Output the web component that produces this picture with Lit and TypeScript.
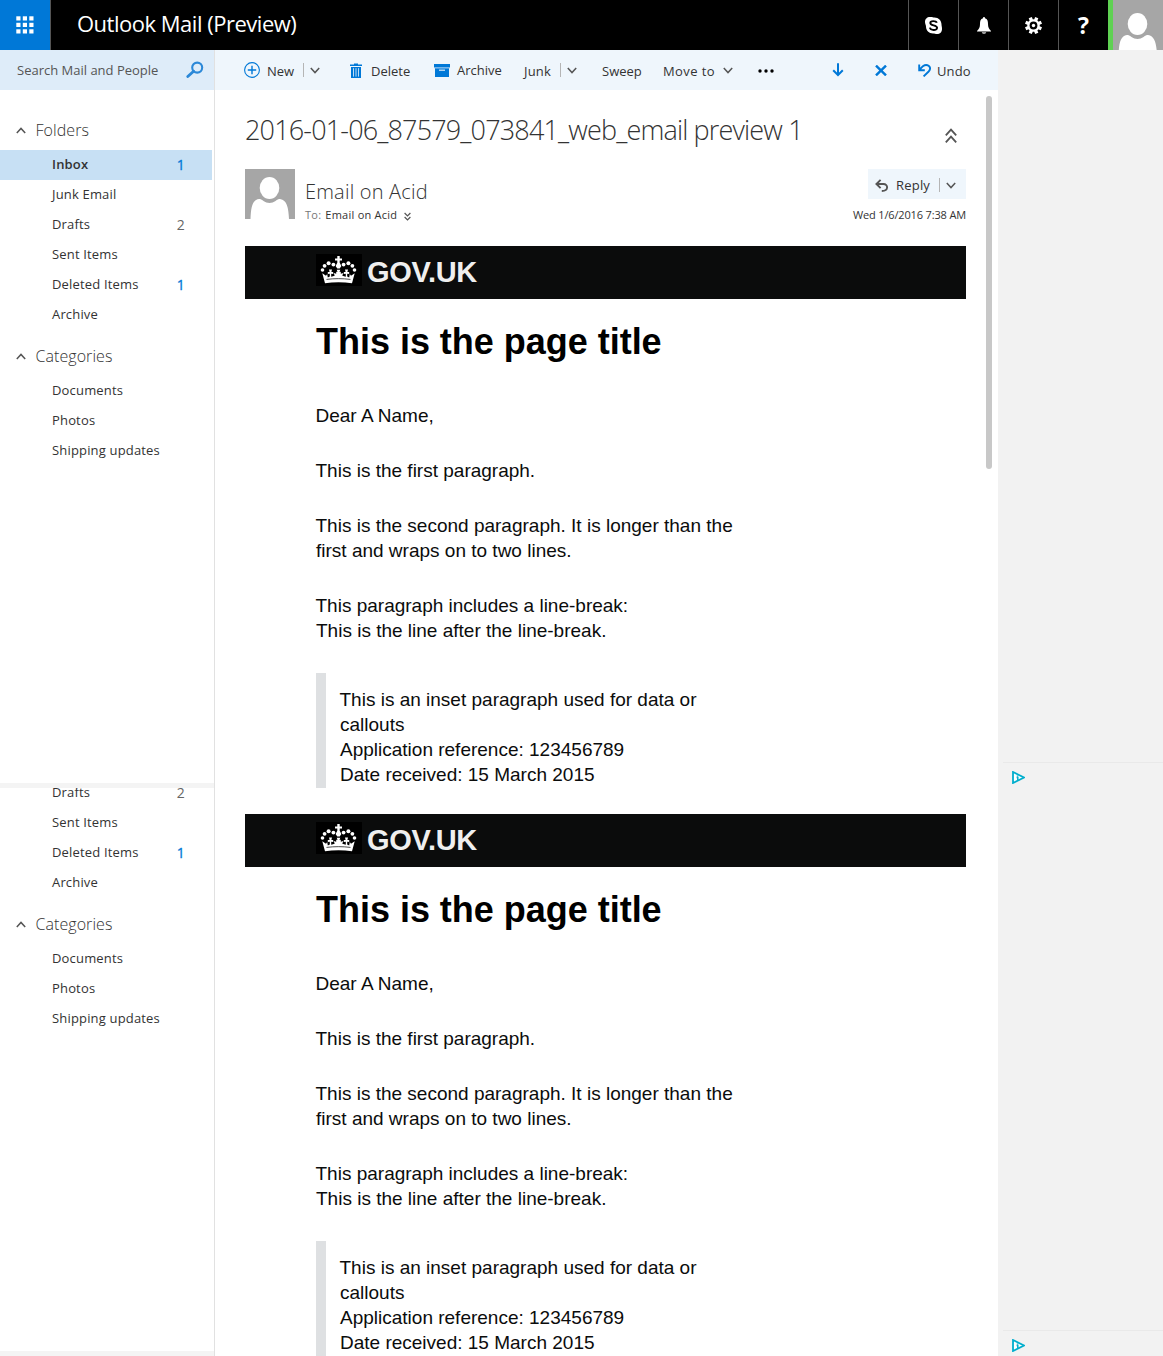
import { LitElement, html, css, svg, nothing } from "lit";
import { customElement, property } from "lit/decorators.js";
import { classMap } from "lit/directives/class-map.js";

interface Folder {
  name: string;
  count?: number;
  unread?: boolean;
  active?: boolean;
}

const FOLDERS: Folder[] = [
  { name: "Inbox", count: 1, unread: true, active: true },
  { name: "Junk Email" },
  { name: "Drafts", count: 2 },
  { name: "Sent Items" },
  { name: "Deleted Items", count: 1, unread: true },
  { name: "Archive" },
];

const CATEGORIES: Folder[] = [
  { name: "Documents" },
  { name: "Photos" },
  { name: "Shipping updates" },
];

const SHAPES: Record<string, unknown> = {
  waffle: svg`${[0, 1, 2].map((r) =>
    [0, 1, 2].map((c) => svg`<rect x=${c * 6.5 + 0.3} y=${r * 6.5 + 0.3} width="4.2" height="4.2" fill="#fff" />`),
  )}`,
  search: svg`<circle cx="11.2" cy="6.6" r="5" fill="none" stroke="#2b88d8" stroke-width="2.1"/><path d="M7.6 10.2 1.8 15.6" stroke="#2b88d8" stroke-width="2.8" stroke-linecap="round"/>`,
  plus: svg`<circle cx="8" cy="8" r="7.4" fill="none" stroke="#0078d7" stroke-width="1.1"/><path d="M8 3.8v8.4M3.8 8h8.4" stroke="#0078d7" stroke-width="1.4"/>`,
  chevron: svg`<path d="M.8 1 5 5.600 9.200 1" fill="none" stroke="#555" stroke-width="1.500"/>`,
  chevronUp: svg`<path d="M.8 6 5 1.400 9.200 6" fill="none" stroke="#555" stroke-width="1.500"/>`,
  trash: svg`<path d="M0 1.600h4V.4h4v1.200h4V3H0zM1 4h10v11H1z" fill="#0078d7"/><path d="M3.500 5.200v8.400M6 5.200v8.400M8.500 5.200v8.400" stroke="#eff6fc" stroke-width=".8"/>`,
  box: svg`<path d="M0 0h16v3.400H0zM1 4.200h14V13H1z" fill="#0078d7"/><path d="M0 3.400h16v.8H0z" fill="#7ab8ea"/><path d="M5 6.200h6" stroke="#cfe6f8" stroke-width="1.300"/>`,
  dots: svg`<circle cx="2" cy="2" r="1.700"/><circle cx="8" cy="2" r="1.700"/><circle cx="14" cy="2" r="1.700"/>`,
  down: svg`<path d="M6 .3v11M1.200 7.300 6 12l4.800-4.700" fill="none" stroke="#0078d7" stroke-width="2"/>`,
  cross: svg`<path d="M1 .6l10 9.800M11 .6 1 10.400" fill="none" stroke="#0078d7" stroke-width="2.400"/>`,
  undo: svg`<path d="M1.200.6v5.600h5.600M1.600 5.800C4.400 2 8 0 10.600 1.800c2.400 1.800 1.600 4-.2 6L5.600 12.400" fill="none" stroke="#0078d7" stroke-width="1.900"/>`,
  reply: svg`<path d="M5.600.8 1.400 5l4.200 4.200M1.400 5h7c5 0 5.400 7-1.600 7" fill="none" stroke="#555" stroke-width="1.900"/>`,
  doubleUp: svg`<path d="M.8 7.400 6 1.600l5.200 5.800M.8 14.400 6 8.600l5.200 5.800" fill="none" stroke="#555" stroke-width="1.800"/>`,
  doubleDown: svg`<path d="M.6 1 3.500 4l2.900-3M.6 5 3.500 8l2.900-3" fill="none" stroke="#555" stroke-width="1.200"/>`,
  skype: svg`<path d="M5 0C8 0 8 .6 9.500.6c4 0 7 3 7 7C16.500 9 17 10 17 12c0 3-2 5-5 5-1.500 0-2.500-.6-4-.6-4 0-7-3-7-7C1 8 0 7 0 5c0-3 2-5 5-5z" fill="#fff"/><path d="M11.800 5.800C11 3.600 5.300 3.400 5.300 6c0 3 6.800 1.600 6.800 4.800 0 3-6.600 2.800-7.200-.2" fill="none" stroke="#000" stroke-width="1.900"/>`,
  bell: svg`<path d="M6 1.200c0-1.600 2-1.600 2 0C10.500 2 11 4 11 7c0 3.500 1 5 3 7v.6H0V14c2-2 3-3.500 3-7 0-3 .5-5 3-5.800z" fill="#fff"/><path d="M4.800 15.200h4.400c-.4 2-4 2-4.400 0z" fill="#ccc"/>`,
  gear: svg`${[0, 45, 90, 135].map(
    (a) => svg`<rect x="6.800" y="0" width="3.400" height="17" fill="#fff" transform="rotate(${a + 22.5} 8.5 8.5)"/>`,
  )}<circle cx="8.500" cy="8.500" r="6.200" fill="#fff"/><circle cx="8.500" cy="8.500" r="3.900" fill="#000"/><circle cx="8.500" cy="8.500" r="1.700" fill="#fff"/>`,
  person: svg`<rect width="50" height="55" fill="#a6a6a6"/><ellipse cx="24.500" cy="24" rx="9.800" ry="11" fill="#fff"/><path d="M5.500 55C6 44 7 36 14 35c2-.3 3 .8 4.500 2 3.500 2.600 8.500 2.600 12 0 1.500-1.200 2.500-2.300 4.500-2 7 1 8.500 9 9 20z" fill="#fff"/>`,
  crown: svg`<rect width="46" height="32" fill="#000"/>
    <g fill="#fff">
      <path d="M21.300 2h2.400v2.400h2.300v2.200h-2.300v2.200l1.700 3.200-1.700 2.600h-2.400l-1.700-2.600 1.700-3.200V6.600H19V4.400h2.300z"/>
      <circle cx="17.400" cy="10.600" r="1.900"/><circle cx="27.600" cy="10.600" r="1.900"/>
      <circle cx="12.600" cy="9.300" r="2"/><circle cx="32.400" cy="9.300" r="2"/>
      <circle cx="8.600" cy="11.800" r="1.900"/><circle cx="36.400" cy="11.800" r="1.900"/>
      <circle cx="6.500" cy="16" r="1.800"/><circle cx="38.500" cy="16" r="1.800"/>
      <path d="M6.300 19.200l3.700 2.600 1.200-1.700.6 3.400 2-1V19.800l-2 .3v-2.200l1.800.2-.6-2.500h3l-.6 2.500 1.800-.2v2.200l-2-.3v3l3.500-1-1-2.800 2.500.8v-2l1.300.2-.8-2.200h3.600l-.8 2.200 1.300-.2v2l2.500-.8-1 2.800 3.500 1v-3l-2 .3v-2.200l1.800.2-.6-2.500h3l-.6 2.500 1.800-.2v2.200l-2-.3v2.700l2 1 .6-3.400 1.200 1.700 3.700-2.600L36 29.200c-8.500-1.300-18.500-1.300-27 0z"/>
    </g>
    <path d="M10.500 25.400c8-1 16-1 24 0" fill="none" stroke="#000" stroke-width=".7"/>`,
  ad: svg`<path d="M1 1v11l11-5.500z" fill="#fff" stroke="#00aecd" stroke-width="1.800"/><path d="M5.500 4.500v1M4.600 6.600h1.200v3" fill="none" stroke="#00aecd" stroke-width="1.500"/>`,
};

const icon = (name: string, w: number, h: number, viewBox = `0 0 ${w} ${h}`) =>
  html`<svg width=${w} height=${h} viewBox=${viewBox} aria-hidden="true">${SHAPES[name]}</svg>`;

const base = css`
  :host {
    display: block;
    font-family: "Open Sans", "Noto Sans", sans-serif;
    font-size: 13px;
    color: #333;
  }
  * {
    box-sizing: border-box;
  }
  svg {
    display: block;
    flex: none;
  }
`;

@customElement("suite-header")
class SuiteHeader extends LitElement {
  static styles = [
    base,
    css`
      .bar {
        display: flex;
        height: 50px;
        background: #000;
        color: #fff;
      }
      .launcher {
        width: 51px;
        display: grid;
        place-items: center;
        background: #0078d7;
        border-right: 1px solid #555;
      }
      .title {
        flex: 1;
        padding-left: 26px;
        font-size: 22px;
        line-height: 47px;
        letter-spacing: -0.49px;
      }
      .tool {
        width: 50px;
        display: grid;
        place-items: center;
        border-left: 1px solid #555;
      }
      .help {
        font: bold 23px/50px "Open Sans", sans-serif;
      }
      .me {
        border-left: 5px solid #5fd152;
      }
    `,
  ];

  render() {
    return html`<header class="bar">
      <div class="launcher">${icon("waffle", 18, 18)}</div>
      <div class="title">Outlook Mail (Preview)</div>
      <div class="tool">${icon("skype", 17, 17)}</div>
      <div class="tool">${icon("bell", 14, 17)}</div>
      <div class="tool">${icon("gear", 17, 17)}</div>
      <div class="tool help">?</div>
      <div class="me">${icon("person", 50, 50)}</div>
    </header>`;
  }
}

@customElement("folder-group")
class FolderGroup extends LitElement {
  @property() label = "";
  @property({ attribute: false }) items: Folder[] = [];

  static styles = [
    base,
    css`
      .head {
        display: flex;
        align-items: center;
        height: 40px;
        padding-left: 15.5px;
        gap: 10px;
        font-size: 16px;
        font-weight: 300;
        letter-spacing: 0.06px;
      }
      .item {
        display: flex;
        justify-content: space-between;
        width: 212px;
        height: 30px;
        padding: 0 27px 0 52px;
        line-height: 28px;
        letter-spacing: 0.17px;
      }
      .active {
        background: #c7e0f4;
      }
      .active .name {
        font-weight: 600;
      }
      .count {
        font-size: 14px;
        line-height: 30px;
        color: #666;
      }
      .unread {
        color: #0078d7;
        -webkit-text-stroke: 0.3px #0078d7;
      }
    `,
  ];

  render() {
    return html`${this.label
        ? html`<div class="head">${icon("chevronUp", 10, 7)}<span>${this.label}</span></div>`
        : nothing}
      ${this.items.map(
        (f) => html`<div class=${classMap({ item: true, active: !!f.active })}>
          <span class="name">${f.name}</span>
          ${f.count ? html`<span class=${classMap({ count: true, unread: !!f.unread })}>${f.count}</span>` : nothing}
        </div>`,
      )}`;
  }
}

@customElement("mail-nav")
class MailNav extends LitElement {
  @property({ type: Boolean, reflect: true }) scrolled = false;

  static styles = [
    base,
    css`
      :host {
        height: 100%;
        border-right: 1px solid #e1e1e1;
      }
      .nav {
        display: flex;
        flex-direction: column;
        height: 100%;
      }
      .search {
        display: flex;
        align-items: center;
        justify-content: space-between;
        height: 40px;
        padding: 0 10px 0 17px;
        background: #deecf9;
        color: #555;
      }
      .groups {
        flex: 1;
        min-height: 0;
        overflow: hidden;
        display: flex;
        flex-direction: column;
        gap: 6px;
        padding-top: 20px;
      }
      :host([scrolled]) .groups {
        padding-top: 0;
      }
      :host([scrolled]) .groups folder-group:first-child {
        margin-top: -10px;
      }
      .foot {
        height: 5px;
        background: #f4f4f4;
      }
    `,
  ];

  render() {
    return html`<nav class="nav">
      ${this.scrolled
        ? nothing
        : html`<div class="search"><span>Search Mail and People</span>${icon("search", 18, 18)}</div>`}
      <div class="groups">
        <folder-group
          .label=${this.scrolled ? "" : "Folders"}
          .items=${this.scrolled ? FOLDERS.slice(2) : FOLDERS}
        ></folder-group>
        <folder-group .label=${"Categories"} .items=${CATEGORIES}></folder-group>
      </div>
      <div class="foot"></div>
    </nav>`;
  }
}

@customElement("mail-toolbar")
class MailToolbar extends LitElement {
  static styles = [
    base,
    css`
      .bar {
        display: flex;
        align-items: center;
        height: 40px;
        padding: 0 27px 0 29px;
        background: #eff6fc;
        line-height: 18px;
      }
      .cmd {
        display: flex;
        align-items: center;
      }
      .cmd span {
        padding-top: 2px;
      }
      .new {
        width: 106px;
        gap: 7px;
      }
      .delete {
        width: 84px;
        gap: 9px;
      }
      .delete svg {
        margin-top: 1px;
      }
      .archive {
        width: 90px;
        gap: 7px;
      }
      .archive span {
        padding-top: 0;
      }
      .junk {
        width: 78px;
        letter-spacing: 0.2px;
      }
      .sweep {
        width: 61px;
      }
      .move {
        width: 95px;
        gap: 8px;
        letter-spacing: 0.4px;
      }
      .more {
        width: 74px;
        padding-top: 2px;
      }
      .next {
        width: 43px;
      }
      .close {
        width: 43px;
      }
      .undo {
        gap: 6px;
        letter-spacing: 0.1px;
      }
      .sep {
        width: 1px;
        height: 14px;
        background: #b5b5b5;
      }
      .new .sep {
        margin-left: 2px;
      }
      .new .sep + svg {
        margin-left: -1px;
      }
      .junk .sep {
        margin: 0 6px 0 9px;
      }
    `,
  ];

  render() {
    return html`<div class="bar">
      <div class="cmd new">${icon("plus", 16, 16)}<span>New</span><i class="sep"></i>${icon("chevron", 10, 7)}</div>
      <div class="cmd delete">${icon("trash", 12, 16)}<span>Delete</span></div>
      <div class="cmd archive">${icon("box", 16, 13)}<span>Archive</span></div>
      <div class="cmd junk"><span>Junk</span><i class="sep"></i>${icon("chevron", 10, 7)}</div>
      <div class="cmd sweep"><span>Sweep</span></div>
      <div class="cmd move"><span>Move to</span>${icon("chevron", 10, 7)}</div>
      <div class="cmd more">${icon("dots", 16, 4)}</div>
      <div class="cmd next">${icon("down", 12, 14)}</div>
      <div class="cmd close">${icon("cross", 12, 11)}</div>
      <div class="cmd undo">${icon("undo", 13, 13)}<span>Undo</span></div>
    </div>`;
  }
}

@customElement("mail-heading")
class MailHeading extends LitElement {
  static styles = [
    base,
    css`
      .subject {
        display: flex;
        justify-content: space-between;
        align-items: flex-start;
        height: 79px;
        padding: 20px 9px 0 0;
        font-size: 27px;
        font-weight: 300;
        line-height: 40px;
        letter-spacing: -0.84px;
      }
      .subject svg {
        margin-top: 18px;
      }
      .from {
        display: flex;
        height: 77px;
      }
      .who {
        flex: 1;
        padding: 9px 0 0 10px;
      }
      .sender {
        font-size: 20px;
        font-weight: 300;
        line-height: 28px;
        letter-spacing: 0.2px;
      }
      .to {
        display: flex;
        align-items: center;
        gap: 4px;
        font-size: 11px;
        line-height: 18px;
        letter-spacing: 0.25px;
      }
      .to b {
        font-weight: 400;
        color: #777;
      }
      .to svg {
        margin: 2px 0 0 3px;
      }
      .side {
        display: flex;
        flex-direction: column;
        align-items: flex-end;
        font-size: 11px;
      }
      .reply {
        display: flex;
        align-items: center;
        width: 98px;
        height: 30px;
        padding: 2px 10px 0 7px;
        background: #eff6fc;
        font-size: 13px;
        letter-spacing: 0.2px;
      }
      .reply span {
        margin-left: 7px;
      }
      .reply .sep {
        width: 1px;
        height: 14px;
        margin: 0 6px 0 auto;
        background: #b5b5b5;
      }
      .date {
        line-height: 32px;
        letter-spacing: -0.15px;
      }
    `,
  ];

  render() {
    return html`<div class="subject"><span>2016-01-06_87579_073841_web_email preview 1</span>${icon("doubleUp", 12, 15)}</div>
      <div class="from">
        ${icon("person", 50, 50, "0 5 50 50")}
        <div class="who">
          <div class="sender">Email on Acid</div>
          <div class="to"><b>To:</b><span>Email on Acid</span>${icon("doubleDown", 7, 9)}</div>
        </div>
        <div class="side">
          <div class="reply">${icon("reply", 14, 13)}<span>Reply</span><i class="sep"></i>${icon("chevron", 10, 7)}</div>
          <div class="date">Wed 1/6/2016 7:38 AM</div>
        </div>
      </div>`;
  }
}

@customElement("mail-body")
class MailBody extends LitElement {
  static styles = [
    base,
    css`
      .mail {
        width: 721px;
        font: 19px/25px "Liberation Sans", Arial, sans-serif;
        color: #0b0c0c;
      }
      .banner {
        display: flex;
        height: 53px;
        padding: 8px 0 0 71px;
        gap: 5px;
        background: #0b0c0c;
        color: #efefef;
        font-size: 29px;
        font-weight: bold;
        line-height: 37px;
        letter-spacing: -0.3px;
      }
      .content {
        display: flex;
        flex-direction: column;
        gap: 30px;
        width: 530px;
        padding-left: 71px;
      }
      h1 {
        margin: 22px 0 10px;
        font-size: 36px;
        line-height: 42px;
        letter-spacing: -0.02px;
        color: #000;
        white-space: nowrap;
      }
      p {
        margin: 0;
        width: 440px;
        text-indent: -0.5px;
      }
      .inset {
        width: 430px;
        height: 130px;
        padding: 14px 20px 0 14px;
        border-left: 10px solid #dee0e2;
      }
    `,
  ];

  render() {
    return html`<article class="mail">
      <div class="banner">${icon("crown", 46, 32)}<span>GOV.UK</span></div>
      <div class="content">
        <h1>This is the page title</h1>
        <p>Dear A Name,</p>
        <p>This is the first paragraph.</p>
        <p>This is the second paragraph. It is longer than the first and wraps on to two lines.</p>
        <p>This paragraph includes a line-break:<br />This is the line after the line-break.</p>
        <p class="inset">
          This is an inset paragraph used for data or callouts<br />Application reference: 123456789<br />Date received:
          15 March 2015
        </p>
      </div>
    </article>`;
  }
}

@customElement("ad-rail")
class AdRail extends LitElement {
  static styles = [
    base,
    css`
      :host {
        height: 100%;
        background: #f2f2f2;
      }
      .rail {
        display: flex;
        flex-direction: column;
        justify-content: flex-end;
        height: 100%;
        padding-left: 5px;
      }
      .slot {
        height: 26px;
        padding: 8px 0 0 9px;
        border-top: 1px solid #e9e9e9;
      }
    `,
  ];

  render() {
    return html`<aside class="rail"><div class="slot">${icon("ad", 13, 13)}</div></aside>`;
  }
}

@customElement("app-root")
class AppRoot extends LitElement {
  static styles = [
    base,
    css`
      :host {
        width: 1163px;
        height: 1356px;
        overflow: hidden;
        background: #fff;
      }
      .pane {
        display: grid;
        grid-template-columns: 215px 783px 165px;
        overflow: hidden;
      }
      .first {
        height: 738px;
      }
      .second {
        height: 568px;
      }
      .pane > * {
        min-height: 0;
      }
      .reader {
        overflow: hidden;
      }
      .scroll {
        display: flex;
        justify-content: space-between;
        padding: 0 6px 0 30px;
      }
      .message {
        width: 721px;
      }
      .thumb {
        width: 6px;
        height: 373px;
        margin-top: 6px;
        border-radius: 3px;
        background: #c8c8c8;
      }
      .second .scroll {
        padding-top: 26px;
      }
    `,
  ];

  render() {
    return html`<suite-header></suite-header>
      <div class="pane first">
        <mail-nav></mail-nav>
        <main class="reader">
          <mail-toolbar></mail-toolbar>
          <div class="scroll">
            <div class="message"><mail-heading></mail-heading><mail-body></mail-body></div>
            <div class="thumb"></div>
          </div>
        </main>
        <ad-rail></ad-rail>
      </div>
      <div class="pane second">
        <mail-nav scrolled></mail-nav>
        <div class="reader">
          <div class="scroll"><mail-body></mail-body></div>
        </div>
        <ad-rail></ad-rail>
      </div>`;
  }
}
